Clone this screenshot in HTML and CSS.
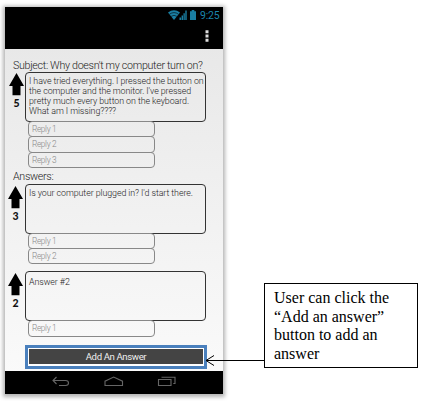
FILE: index.html
```html
<!DOCTYPE html>
<html lang="en">
<head>
<meta charset="utf-8">
<title>Question thread</title>
<link rel="stylesheet" href="styles.css">
</head>
<body>
<div class="page">
  <div class="phone">
    <header class="topbar">
      <div class="status">
        <svg class="signal" width="31" height="12" viewBox="0 0 31 12">
          <path d="M0 3.5Q6 -1 12 3.5L6 11Z" fill="#1a7fa3"/>
          <path d="M1.5 5.2Q6 2 10.5 5.2M3.2 7.3Q6 5.4 8.8 7.3" fill="none" stroke="#000" stroke-width=".6"/>
          <path d="M11.5 11V8.6h1.6V11zM13.6 11V6.5h1.4V11zM15.5 11V4.2h1.3V11zM17.3 11V1.5h1.4V11z" fill="#1a7fa3"/>
          <path d="M22 2.2h1.7V1h2.6v1.2H28V11h-6z" fill="#1a7fa3"/>
        </svg>
        <span class="clock">9:25</span>
      </div>
      <svg class="more" width="4" height="12" viewBox="0 0 4 12"><path d="M.5 .3h3v3h-3zM.5 4.5h3v3h-3zM.5 8.7h3v3h-3z" fill="#ddd"/></svg>
    </header>
    <main class="content">
      <h1 class="subject">Subject: Why doesn't my computer turn on?</h1>
      <section class="post">
        <div class="vote question-vote">
          <svg width="15" height="23" viewBox="0 0 15 23"><path d="M7.5 0L15 13H11.5V22.3H3.5V13H0Z"/></svg>
          <span class="count">5</span>
        </div>
        <div class="thread">
          <div class="card">I have tried everything. I pressed the button on<br>the computer and the monitor. I've pressed<br>pretty much every button on the keyboard.<br>What am I missing????</div>
          <div class="reply">Reply 1</div>
          <div class="reply">Reply 2</div>
          <div class="reply">Reply 3</div>
        </div>
      </section>
      <h2 class="answers">Answers:</h2>
      <section class="post">
        <div class="vote">
          <svg width="15" height="23" viewBox="0 0 15 23"><path d="M7.5 0L15 13H11.5V22.3H3.5V13H0Z"/></svg>
          <span class="count">3</span>
        </div>
        <div class="thread">
          <div class="card">Is your computer plugged in? I'd start there.</div>
          <div class="reply">Reply 1</div>
          <div class="reply">Reply 2</div>
        </div>
      </section>
      <section class="post second">
        <div class="vote">
          <svg width="15" height="23" viewBox="0 0 15 23"><path d="M7.5 0L15 13H11.5V22.3H3.5V13H0Z"/></svg>
          <span class="count">2</span>
        </div>
        <div class="thread">
          <div class="card short">Answer #2</div>
          <div class="reply">Reply 1</div>
        </div>
      </section>
      <div class="highlight"><button class="add">Add An Answer</button></div>
    </main>
    <nav class="navbar">
      <svg width="218" height="23" viewBox="0 0 218 23" fill="none" stroke="#666" stroke-width="1.1">
        <path d="M51.5 6L48 9.5L51.5 13M48 9.5H60.5Q63.5 9.5 63.5 12T60.5 14.5H54"/>
        <path d="M100 14.5V10.2L108.7 6L117.5 10.2V14.5Z"/>
        <path d="M153.5 8.5H166V14.5H153.5ZM156.5 6.2H170V12.5H168.3"/>
      </svg>
    </nav>
  </div>
  <svg class="connector" width="60" height="14" viewBox="0 0 60 14"><path d="M1 7.5H60M9 2.5L1 7.5L9 12.5" fill="none" stroke="#000" stroke-width="1"/></svg>
  <aside class="note">User can click the<br>“Add an answer”<br>button to add an<br>answer</aside>
</div>
</body>
</html>
```
FILE: styles.css
```css
* { box-sizing: border-box; }
body { margin: 0; background: #fff; overflow: hidden; }
.page { position: relative; width: 427px; height: 401px; padding: 7px 0 0 5px; }
.phone {
  display: flex; flex-direction: column;
  width: 218px; height: 387px;
  font-family: Roboto, sans-serif; font-weight: 300; color: #222;
  background: linear-gradient(#e8e8e8 10%, #fafafa 95%);
  box-shadow: 0 1px 4px 2px #b4b4b4;
}
.topbar { height: 42px; background: #000; display: flex; flex-direction: column; align-items: flex-end; }
.status { display: flex; height: 15px; padding: 2px 3px 0 0; gap: 1px; }
.clock { font-size: 10.5px; line-height: 13px; font-weight: 400; color: #1a86ad; width: 20px; letter-spacing: -.2px; }
.more { margin: 8px 14px 0 0; }
.content { height: 322px; padding: 9px 0 0 3px; }
h1, h2 { margin: 0; font-weight: 300; white-space: nowrap; padding-left: 5px; letter-spacing: -.31px; }
.subject { font-size: 10.7px; line-height: 16px; height: 14px; }
.answers { font-size: 10.7px; line-height: 14px; height: 16.8px; padding-top: 3.5px; }
.post { display: flex; }
.second { margin-top: 8.2px; }
.vote { width: 17px; padding: 2px 2px 0 0; display: flex; flex-direction: column; align-items: center; }
.question-vote { padding: 1px 0 0; }
.vote svg { flex: none; }
.count { font: 900 10.5px/14px Lato, sans-serif; color: #111; }
.thread { width: 181px; }
.card {
  height: 50px; padding: 3px 0 0 3px;
  border: 1px solid #333; border-radius: 4px;
  font-size: 8.9px; line-height: 10px; white-space: nowrap; letter-spacing: -.08px;
}
.short { padding-top: 5px; }
.reply {
  width: 127px; height: 16.3px; margin: 0 0 -1px 3px; padding-left: 3px;
  border: 1px solid #888; border-radius: 4px;
  font-size: 8.3px; line-height: 15px; letter-spacing: -.35px; color: #888;
}
.card + .reply { margin-top: -1px; }
.highlight { width: 182px; height: 24px; margin: 8.8px 0 0 17px; background: #4a80bd; padding: 3px; }
.add {
  display: block; width: 176px; height: 18px; padding: 0;
  background: #444; border: solid #fff; border-width: 1px 1px 2px;
  font: 400 9.6px/15px Roboto, sans-serif; letter-spacing: -.38px; color: #eee; text-align: center;
}
.navbar { height: 23px; background: #000; }
.navbar svg { display: block; }
.connector { position: absolute; left: 205px; top: 353px; }
.note {
  position: absolute; left: 264px; top: 283px; width: 154px; height: 85px;
  border: 1px solid #000; padding: 5px 0 0 9px; background: #fff;
  font: 16px/18.5px "Liberation Serif", serif; color: #000; white-space: nowrap;
}
```
